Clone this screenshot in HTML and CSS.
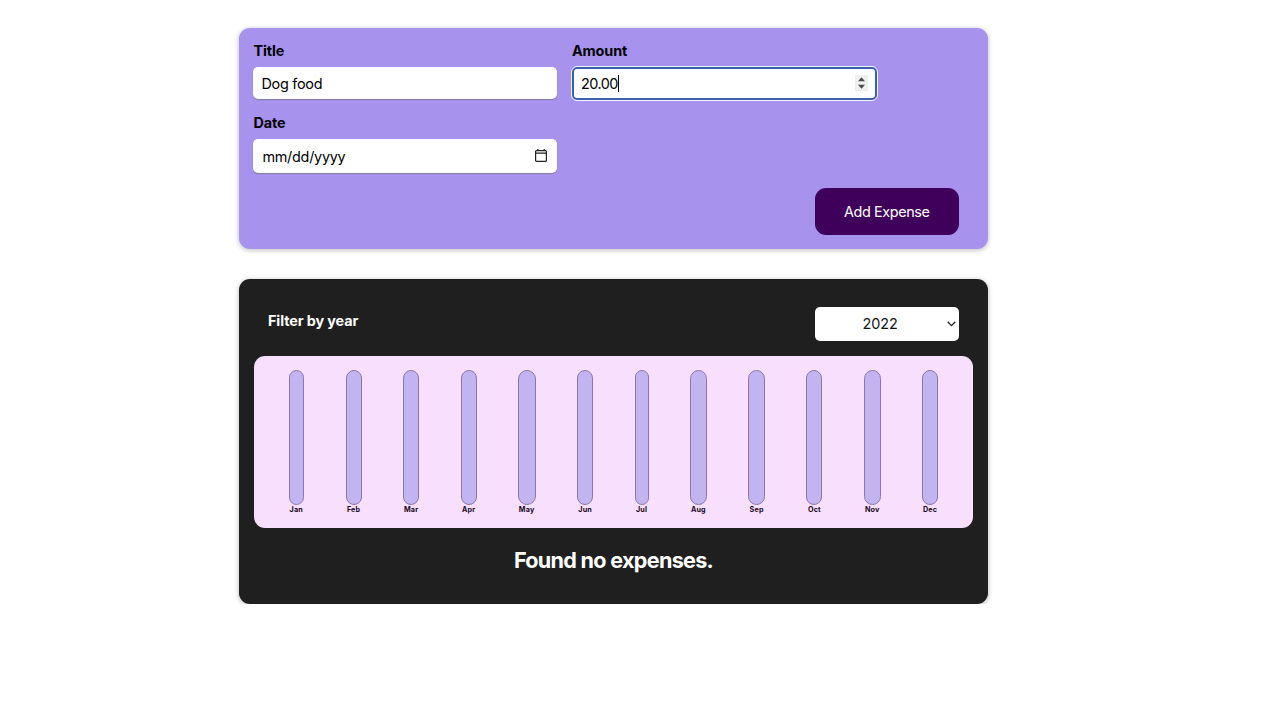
FILE: index.html
```html
<!DOCTYPE html>
<html lang="en">
<head>
<meta charset="utf-8">
<title>Expenses</title>
<link rel="stylesheet" href="styles.css">
</head>
<body>
<main class="page">
  <form class="card new-expense">
    <div class="controls">
      <div class="control">
        <label class="label">Title</label>
        <div class="field"><span class="value">Dog food</span></div>
      </div>
      <div class="control">
        <label class="label">Amount</label>
        <div class="field field-focus">
          <span class="value amount">20.00</span><span class="caret"></span>
          <svg class="spinner" width="13" height="16" viewBox="0 0 13 16"><path class="spinner-bg" d="M0 0h13v16H0z"/><path d="M3 6.2 6.5 2.2 10 6.2zM3 9.8h7l-3.5 4z" fill="#4b4b4b"/></svg>
        </div>
      </div>
      <div class="control">
        <label class="label">Date</label>
        <div class="field field-date">
          <span class="value">mm/dd/yyyy</span>
          <svg class="calendar" width="12" height="13" viewBox="0 0 12 13" fill="none" stroke="#222" stroke-width="1.2"><rect x=".6" y="1.6" width="10.8" height="10.8" rx="1"/><path d="M.6 4.2h10.8M2.8 0v2M9.2 0v2"/></svg>
        </div>
      </div>
    </div>
    <div class="actions"><button type="button" class="button">Add Expense</button></div>
  </form>
  <section class="card expenses">
    <div class="filter">
      <span class="filter-label">Filter by year</span>
      <div class="select">
        <span>2022</span>
        <svg class="chevron" width="9" height="6" viewBox="0 0 9 6" fill="none" stroke="#222" stroke-width="1.3"><path d="M.7.8 4.5 4.6 8.3.8"/></svg>
      </div>
    </div>
    <div class="chart">
      <div class="bar" style="width:15.3px"><i class="track"></i><span class="month">Jan</span></div>
      <div class="bar" style="width:16px"><i class="track"></i><span class="month">Feb</span></div>
      <div class="bar" style="width:16.6px"><i class="track"></i><span class="month">Mar</span></div>
      <div class="bar" style="width:16px"><i class="track"></i><span class="month">Apr</span></div>
      <div class="bar" style="width:18px"><i class="track"></i><span class="month">May</span></div>
      <div class="bar" style="width:16.4px"><i class="track"></i><span class="month">Jun</span></div>
      <div class="bar" style="width:14px"><i class="track"></i><span class="month">Jul</span></div>
      <div class="bar" style="width:17px"><i class="track"></i><span class="month">Aug</span></div>
      <div class="bar" style="width:17px"><i class="track"></i><span class="month">Sep</span></div>
      <div class="bar" style="width:16px"><i class="track"></i><span class="month">Oct</span></div>
      <div class="bar" style="width:17px"><i class="track"></i><span class="month">Nov</span></div>
      <div class="bar" style="width:16.3px"><i class="track"></i><span class="month">Dec</span></div>
    </div>
    <h2 class="empty">Found no expenses.</h2>
  </section>
</main>
</body>
</html>
```
FILE: styles.css
```css
* { box-sizing: border-box; }
body {
  margin: 0;
  background: #fff;
  font-family: Inter, "Liberation Sans", sans-serif;
  font-size: 14.4px;
  color: #000;
}
.page {
  width: 749px;
  margin: 0 0 0 239px;
  padding-top: 28px;
  display: flex;
  flex-direction: column;
  gap: 29.5px;
}
.card {
  border-radius: 11px;
  box-shadow: 0 1px 4px 1px rgba(0, 0, 0, .2);
}
.new-expense {
  height: 221.4px;
  padding: 14px 14.4px;
  background: #a792ee;
}
.controls {
  display: grid;
  grid-template-columns: 304px 305px;
  column-gap: 14.5px;
  row-gap: 14px;
}
.label {
  display: block;
  height: 17px;
  margin-bottom: 8px;
  line-height: 18px;
  font-weight: 700;
  letter-spacing: -.1px;
}
.field {
  display: flex;
  align-items: center;
  height: 32px;
  padding: 0 8px;
  border-radius: 5px;
  background: #fff;
  box-shadow: 0 1px 1px rgba(110, 110, 110, .65);
}
.value { letter-spacing: -.25px; }
.amount { letter-spacing: -.5px; }
.field-focus {
  outline: 1px solid #eef6ff;
  border: 2px solid #3c60ac;
  height: 33px;
  padding: 0 7px;
  box-shadow: none;
}
.field-date {
  height: 34px;
  padding: 0 10px 0 9px;
}
.caret { width: 1px; height: 17px; background: #000; }
.spinner { margin-left: auto; margin-bottom: 1px; }
.spinner-bg { fill: #efefef; }
.calendar { margin-left: auto; margin-bottom: 1px; }
.actions {
  display: flex;
  justify-content: flex-end;
  padding: 14.5px 14.6px 0 0;
}
.button {
  width: 144.5px;
  height: 47.5px;
  border: 0;
  border-radius: 11px;
  background: #3f005b;
  color: #fff;
  font: 14.4px Inter, "Liberation Sans", sans-serif;
  letter-spacing: -.4px;
}
.expenses {
  height: 325.5px;
  padding: 28px 14.6px 0;
  background: #1f1f1f;
  color: #fff;
}
.filter {
  display: flex;
  justify-content: space-between;
  align-items: center;
  padding: 0 14.6px 0 14.4px;
}
.filter-label {
  margin-bottom: 7px;
  font-weight: 700;
  letter-spacing: -.1px;
}
.select {
  display: flex;
  align-items: center;
  justify-content: flex-end;
  gap: 49px;
  width: 144px;
  height: 34px;
  padding-right: 3px;
  border-radius: 5px;
  background: #fff;
  color: #111;
}
.chart {
  display: flex;
  justify-content: space-around;
  height: 172.5px;
  margin-top: 15px;
  padding: 14px 14.4px;
  border-radius: 11px;
  background: #f7dffd;
  color: #1a0824;
}
.bar {
  display: flex;
  flex-direction: column;
  align-items: center;
}
/* nudge the early months toward the centre of their slots */
.bar:nth-child(n+2):nth-child(-n+4) { margin: 0 -.4px 0 .4px; }
.track {
  width: 100%;
  height: 136px;
  border: 1px solid #8c78a8;
  border-radius: 9px;
  background: #c1b4f1;
}
.month {
  font-size: 7.2px;
  font-weight: 700;
  line-height: 9px;
  letter-spacing: .2px;
}
.empty {
  margin: 18.5px 0 0;
  text-align: center;
  font-size: 21.6px;
  line-height: 26px;
  font-weight: 700;
  letter-spacing: -.7px;
}
```
